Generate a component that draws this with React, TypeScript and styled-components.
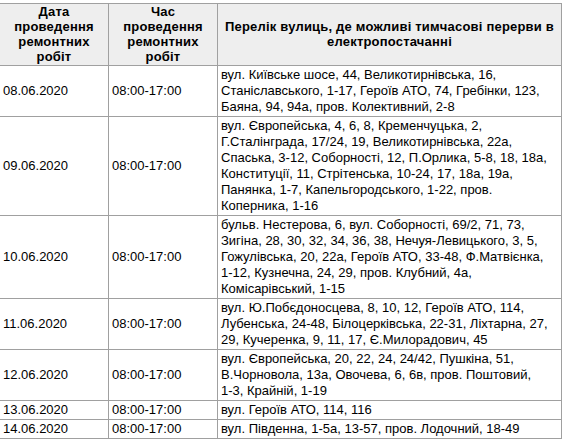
import * as React from 'react';
import styled, { createGlobalStyle } from 'styled-components';

interface IoutageRow {
	date: string;
	time: string;
	streets: Array<string>;
}

const rows: Array<IoutageRow> = [
	{
		date: '08.06.2020',
		time: '08:00-17:00',
		streets: [
			'вул. Київське шосе, 44, Великотирнівська, 16,',
			'Станіславського, 1-17, Героїв АТО, 74, Гребінки, 123,',
			'Баяна, 94, 94а, пров. Колективний, 2-8',
		],
	},
	{
		date: '09.06.2020',
		time: '08:00-17:00',
		streets: [
			'вул. Європейська, 4, 6, 8, Кременчуцька, 2,',
			'Г.Сталінграда, 17/24, 19, Великотирнівська, 22а,',
			'Спаська, 3-12, Соборності, 12, П.Орлика, 5-8, 18, 18а,',
			'Конституції, 11, Стрітенська, 10-24, 17, 18а, 19а,',
			'Панянка, 1-7, Капельгородського, 1-22, пров.',
			'Коперника, 1-16',
		],
	},
	{
		date: '10.06.2020',
		time: '08:00-17:00',
		streets: [
			'бульв. Нестерова, 6, вул. Соборності, 69/2, 71, 73,',
			'Зигіна, 28, 30, 32, 34, 36, 38, Нечуя-Левицького, 3, 5,',
			'Гожулівська, 20, 22а, Героїв АТО, 33-48, Ф.Матвієнка,',
			'1-12, Кузнечна, 24, 29, пров. Клубний, 4а,',
			'Комісарівський, 1-15',
		],
	},
	{
		date: '11.06.2020',
		time: '08:00-17:00',
		streets: [
			'вул. Ю.Побєдоносцева, 8, 10, 12, Героїв АТО, 114,',
			'Лубенська, 24-48, Білоцерківська, 22-31, Ліхтарна, 27,',
			'29, Кучеренка, 9, 11, 17, Є.Милорадович, 45',
		],
	},
	{
		date: '12.06.2020',
		time: '08:00-17:00',
		streets: [
			'вул. Європейська, 20, 22, 24, 24/42, Пушкіна, 51,',
			'В.Чорновола, 13а, Овочева, 6, 6в, пров. Поштовий,',
			'1-3, Крайній, 1-19',
		],
	},
	{
		date: '13.06.2020',
		time: '08:00-17:00',
		streets: ['вул. Героїв АТО, 114, 116'],
	},
	{
		date: '14.06.2020',
		time: '08:00-17:00',
		streets: ['вул. Південна, 1-5а, 13-57, пров. Лодочний, 18-49'],
	},
];

const App: React.FC = () => {
	return (
		<>
			<GlobalStyle />
			<Table>
				<colgroup>
					<col style={{ width: 109 }} />
					<col style={{ width: 109 }} />
					<col />
				</colgroup>
				<thead>
					<tr>
						<HeadCell>
							<Line>Дата</Line>
							<Line>проведення</Line>
							<Line>ремонтних</Line>
							<Line>робіт</Line>
						</HeadCell>
						<HeadCell>
							<Line>Час</Line>
							<Line>проведення</Line>
							<Line>ремонтних</Line>
							<Line>робіт</Line>
						</HeadCell>
						<HeadCell>
							<Line>Перелік вулиць, де можливі тимчасові перерви в</Line>
							<Line>електропостачанні</Line>
						</HeadCell>
					</tr>
				</thead>
				<tbody>
					{rows.map((item) => (
						<tr key={item.date}>
							<Cell>{item.date}</Cell>
							<Cell>{item.time}</Cell>
							<Cell>
								{item.streets.map((line, i) => (
									<Line key={i}>{line}</Line>
								))}
							</Cell>
						</tr>
					))}
				</tbody>
			</Table>
		</>
	);
};

export default App;

const GlobalStyle = createGlobalStyle`
	html, body {
		margin: 0;
		padding: 0;
		background: #fff;
	}
	body {
		font-family: "Liberation Sans", Arial, sans-serif;
		color: #000;
	}
`

const Table = styled.table`
	width: 563px;
	margin: 3px 0 0 -1px;
	border-collapse: collapse;
	table-layout: fixed;
	font-size: 13px;
	line-height: 16px;
`

const HeadCell = styled.th`
	padding: 0 3px 1px;
	border: 1px solid #a0a0a0;
	background-color: #eeeeee;
	font-weight: 700;
	line-height: 15px;
	letter-spacing: 0.2px;
	text-align: center;
	vertical-align: middle;
`

const Cell = styled.td`
	padding: 1px 3px;
	border: 1px solid #a0a0a0;
	text-align: left;
	vertical-align: middle;
	white-space: nowrap;
`

const Line = styled.span`
	display: block;
	white-space: nowrap;
`
